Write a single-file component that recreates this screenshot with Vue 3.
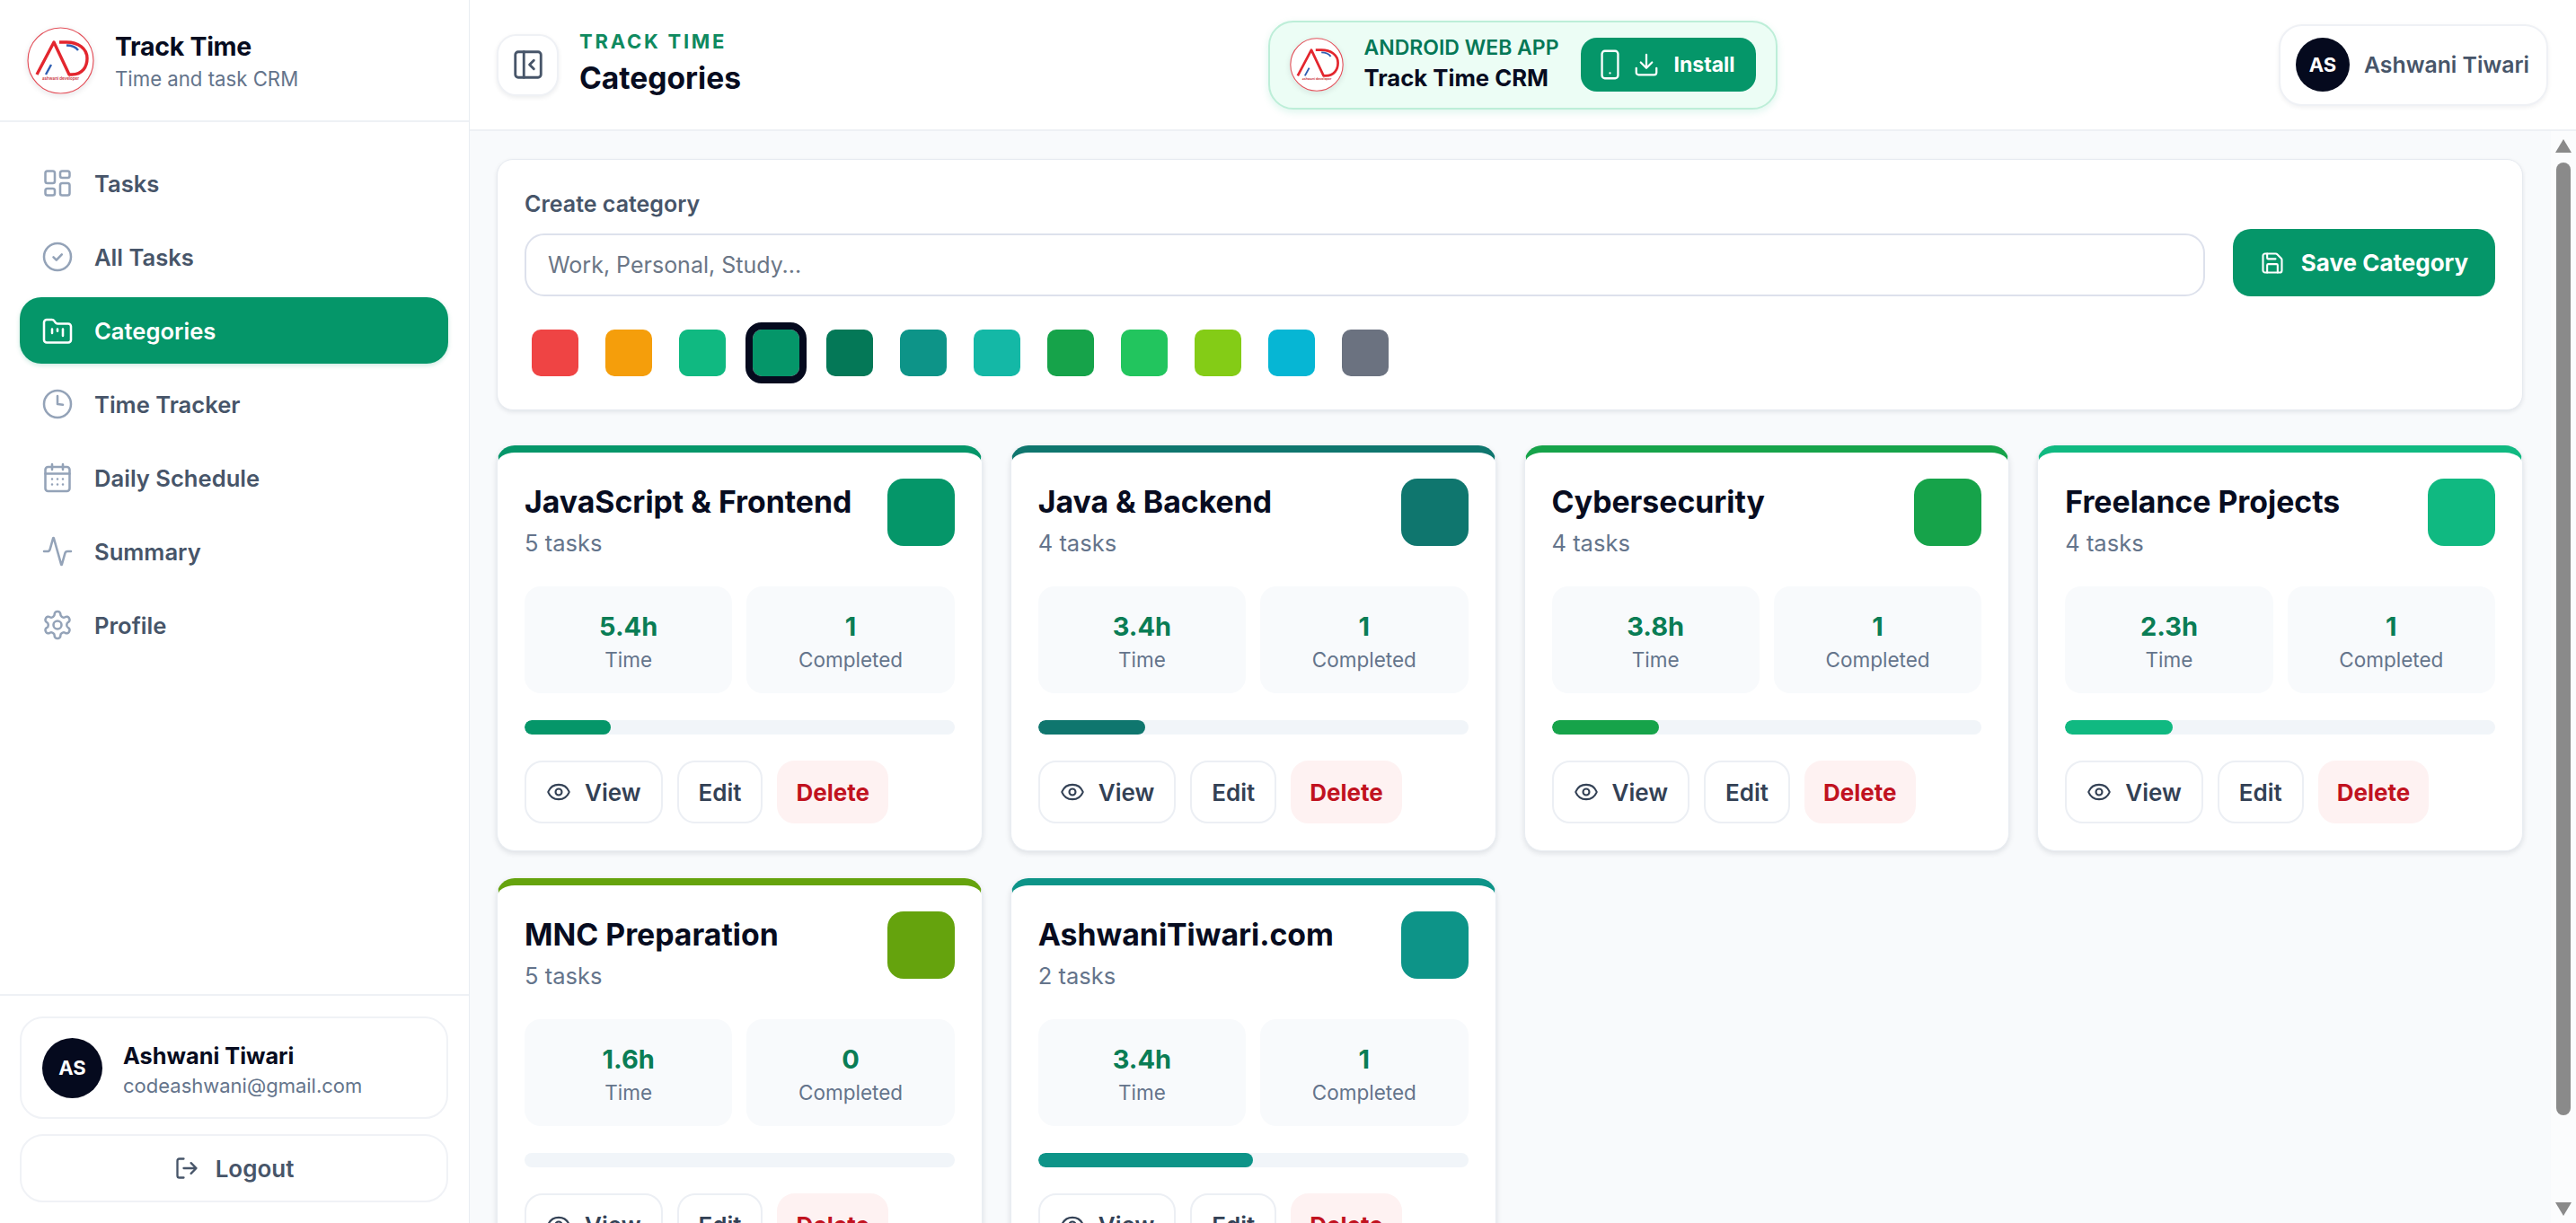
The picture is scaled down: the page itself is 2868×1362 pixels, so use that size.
<script setup>
const nav = [
  { label: 'Tasks', icon: 'tasks' },
  { label: 'All Tasks', icon: 'all' },
  { label: 'Categories', icon: 'cat', active: true },
  { label: 'Time Tracker', icon: 'time' },
  { label: 'Daily Schedule', icon: 'cal' },
  { label: 'Summary', icon: 'sum' },
  { label: 'Profile', icon: 'gear' }
]
const swatches = ['#ef4444', '#f59e0b', '#10b981', '#059669', '#047857', '#0d9488', '#14b8a6', '#16a34a', '#22c55e', '#84cc16', '#06b6d4', '#6b7280']
const cards = [
  { name: 'JavaScript & Frontend', tasks: '5 tasks', time: '5.4h', done: 1, color: '#059669', pct: 20 },
  { name: 'Java & Backend', tasks: '4 tasks', time: '3.4h', done: 1, color: '#0f766e', pct: 25 },
  { name: 'Cybersecurity', tasks: '4 tasks', time: '3.8h', done: 1, color: '#16a34a', pct: 25 },
  { name: 'Freelance Projects', tasks: '4 tasks', time: '2.3h', done: 1, color: '#10b981', pct: 25 },
  { name: 'MNC Preparation', tasks: '5 tasks', time: '1.6h', done: 0, color: '#65a30d', pct: 0 },
  { name: 'AshwaniTiwari.com', tasks: '2 tasks', time: '3.4h', done: 1, color: '#0d9488', pct: 50 }
]
</script>

<template>
  <div class="app">
    <aside class="sidebar">
      <div class="brand">
        <div class="logo">
          <svg viewBox="0 0 75 75" width="75" height="75">
            <circle cx="37.5" cy="37.5" r="36.5" fill="#fff" stroke="#e2505a" stroke-width="1.2" />
            <path d="M11 53 L30 17 L47 53 L50 53 C62 53 67 44 67 35 C67 24 57 17 44 17 L36 17" fill="none" stroke="#e3262e" stroke-width="3.400" stroke-linejoin="round" />
            <path d="M21 53 L27 42 M44 20.500 C50 20.500 54 22 57 26" fill="none" stroke="#2f5fb3" stroke-width="2.400" />
            <text x="37.500" y="58.500" text-anchor="middle" class="logo-text">ashwani developer</text>
          </svg>
        </div>
        <div>
          <div class="brand-title">Track Time</div>
          <div class="brand-sub">Time and task CRM</div>
        </div>
      </div>

      <nav class="nav">
        <a v-for="item in nav" :key="item.label" class="nav-item" :class="{ active: item.active }">
          <svg class="nav-icon" viewBox="0 0 24 24">
            <template v-if="item.icon === 'tasks'">
              <rect x="3" y="3" width="7" height="9" rx="1.500" />
              <rect x="14" y="3" width="7" height="5" rx="1.500" />
              <rect x="14" y="12" width="7" height="9" rx="1.500" />
              <rect x="3" y="16" width="7" height="5" rx="1.500" />
            </template>
            <template v-else-if="item.icon === 'all'">
              <circle cx="12" cy="12" r="10" />
              <path d="m9 12.200 2.200 2.200 4-4.200" />
            </template>
            <template v-else-if="item.icon === 'cat'">
              <path d="M4 21h16a2 2 0 0 0 2-2V9a2 2 0 0 0-2-2h-7.930a2 2 0 0 1-1.660-.9l-.82-1.200A2 2 0 0 0 7.930 4H4a2 2 0 0 0-2 2v13c0 1.100.9 2 2 2Z" />
              <path d="M8 11v3M12 11v1.500M16 11v5" />
            </template>
            <template v-else-if="item.icon === 'time'">
              <circle cx="12" cy="12" r="10" />
              <path d="M12 6v6l4 0.500" />
            </template>
            <template v-else-if="item.icon === 'cal'">
              <rect x="3" y="4" width="18" height="18" rx="2" />
              <path d="M8 2v4M16 2v4M3 9h18M8 13h.01M12 13h.01M16 13h.01M8 17h.01M12 17h.01M16 17h.01" />
            </template>
            <template v-else-if="item.icon === 'sum'">
              <path d="M22 12h-2.480a2 2 0 0 0-1.930 1.460l-2.350 8.360a.25.25 0 0 1-.48 0L9.240 2.180a.25.25 0 0 0-.48 0l-2.350 8.360A2 2 0 0 1 4.490 12H2" />
            </template>
            <template v-else>
              <path d="M12.220 2h-.44a2 2 0 0 0-2 2v.18a2 2 0 0 1-1 1.730l-.43.25a2 2 0 0 1-2 0l-.15-.08a2 2 0 0 0-2.730.73l-.22.38a2 2 0 0 0 .73 2.730l.15.1a2 2 0 0 1 1 1.720v.51a2 2 0 0 1-1 1.740l-.15.09a2 2 0 0 0-.73 2.730l.22.38a2 2 0 0 0 2.730.73l.15-.08a2 2 0 0 1 2 0l.43.25a2 2 0 0 1 1 1.730V20a2 2 0 0 0 2 2h.44a2 2 0 0 0 2-2v-.18a2 2 0 0 1 1-1.730l.43-.25a2 2 0 0 1 2 0l.15.08a2 2 0 0 0 2.730-.73l.22-.39a2 2 0 0 0-.73-2.730l-.15-.08a2 2 0 0 1-1-1.740v-.5a2 2 0 0 1 1-1.740l.15-.09a2 2 0 0 0 .73-2.730l-.22-.38a2 2 0 0 0-2.730-.73l-.15.08a2 2 0 0 1-2 0l-.43-.25a2 2 0 0 1-1-1.730V4a2 2 0 0 0-2-2z" />
              <circle cx="12" cy="12" r="3" />
            </template>
          </svg>
          <span>{{ item.label }}</span>
        </a>
      </nav>

      <div class="side-foot">
        <div class="user-card">
          <div class="avatar big">AS</div>
          <div class="user-text">
            <div class="user-name">Ashwani Tiwari</div>
            <div class="user-mail">codeashwani@gmail.com</div>
          </div>
        </div>
        <button class="logout">
          <svg class="ico logout-ico" viewBox="0 0 24 24">
            <path d="M9 21H5a2 2 0 0 1-2-2V5a2 2 0 0 1 2-2h4M16 17l5-5-5-5M21 12H9" />
          </svg>
          Logout
        </button>
      </div>
    </aside>

    <div class="main">
      <header class="topbar">
        <div class="top-left">
          <button class="toggle">
            <svg class="ico toggle-ico" viewBox="0 0 24 24">
              <rect x="3" y="3" width="18" height="18" rx="2" />
              <path d="M9 3v18M16 15l-3-3 3-3" />
            </svg>
          </button>
          <div class="titles">
            <div class="eyebrow">TRACK TIME</div>
            <h1 class="page-title">Categories</h1>
          </div>
        </div>

        <div class="banner">
          <div class="logo small">
            <svg viewBox="0 0 75 75" width="60" height="60">
              <circle cx="37.500" cy="37.500" r="36.500" fill="#fff" stroke="#e2505a" stroke-width="1.400" />
              <path d="M11 53 L30 17 L47 53 L50 53 C62 53 67 44 67 35 C67 24 57 17 44 17 L36 17" fill="none" stroke="#e3262e" stroke-width="3.400" stroke-linejoin="round" />
              <path d="M21 53 L27 42 M44 20.500 C50 20.500 54 22 57 26" fill="none" stroke="#2f5fb3" stroke-width="2.400" />
              <text x="37.500" y="58.500" text-anchor="middle" class="logo-text">ashwani developer</text>
            </svg>
          </div>
          <div class="banner-text">
            <div class="banner-top">ANDROID WEB APP</div>
            <div class="banner-name">Track Time CRM</div>
          </div>
          <button class="install">
            <svg class="ico phone-ico" viewBox="0 0 20 32">
              <rect x="1.500" y="1.500" width="17" height="29" rx="3" />
              <path d="M10 25h.01" />
            </svg>
            <svg class="ico dl-ico" viewBox="0 0 24 24">
              <path d="M21 15v4a2 2 0 0 1-2 2H5a2 2 0 0 1-2-2v-4M7 10l5 5 5-5M12 15V3" />
            </svg>
            <span>Install</span>
          </button>
        </div>

        <div class="top-right">
          <div class="chip">
            <div class="avatar">AS</div>
            <span class="chip-name">Ashwani Tiwari</span>
          </div>
        </div>
      </header>

      <div class="body">
        <main class="content">
          <section class="panel">
            <label class="panel-label">Create category</label>
            <div class="form-row">
              <input class="field" placeholder="Work, Personal, Study..." />
              <button class="save">
                <svg class="ico save-ico" viewBox="0 0 24 24">
                  <path d="M15.200 3a2 2 0 0 1 1.400.6l3.800 3.800a2 2 0 0 1 .6 1.400V19a2 2 0 0 1-2 2H5a2 2 0 0 1-2-2V5a2 2 0 0 1 2-2z" />
                  <path d="M17 21v-7a1 1 0 0 0-1-1H8a1 1 0 0 0-1 1v7M7 3v4a1 1 0 0 0 1 1h7" />
                </svg>
                Save Category
              </button>
            </div>
            <div class="swatches">
              <span
                v-for="(c, i) in swatches"
                :key="c"
                class="swatch"
                :class="{ picked: i === 3 }"
                :style="{ backgroundColor: c }"
              ></span>
            </div>
          </section>

          <section class="grid">
            <article v-for="card in cards" :key="card.name" class="card" :style="{ borderTopColor: card.color }">
              <div class="card-head">
                <div class="card-titles">
                  <h2 class="card-name">{{ card.name }}</h2>
                  <div class="card-sub">{{ card.tasks }}</div>
                </div>
                <div class="card-color" :style="{ backgroundColor: card.color }"></div>
              </div>
              <div class="stats">
                <div class="stat">
                  <div class="stat-val">{{ card.time }}</div>
                  <div class="stat-lbl">Time</div>
                </div>
                <div class="stat">
                  <div class="stat-val">{{ card.done }}</div>
                  <div class="stat-lbl">Completed</div>
                </div>
              </div>
              <div class="track">
                <div class="fill" :style="{ width: card.pct + '%', backgroundColor: card.color }"></div>
              </div>
              <div class="actions">
                <button class="btn view">
                  <svg class="ico eye-ico" viewBox="0 0 24 24">
                    <path d="M2.060 12.350a1 1 0 0 1 0-.7 10.750 10.750 0 0 1 19.880 0 1 1 0 0 1 0 .7 10.750 10.750 0 0 1-19.880 0" />
                    <circle cx="12" cy="12" r="3" />
                  </svg>
                  View
                </button>
                <button class="btn">Edit</button>
                <button class="btn danger">Delete</button>
              </div>
            </article>
          </section>
        </main>

        <div class="scrollbar">
          <span class="arrow up"></span>
          <span class="thumb"></span>
          <span class="arrow down"></span>
        </div>
      </div>
    </div>
  </div>
</template>

<style scoped>
* { box-sizing: border-box; }
.app {
  display: flex;
  height: 100vh;
  overflow: hidden;
  font-family: Inter, "Liberation Sans", sans-serif;
  background: #f8fafc;
  color: #0b1020;
}
.sidebar {
  width: 523px;
  flex: none;
  display: flex;
  flex-direction: column;
  background: #fff;
  border-right: 1px solid #e9edf2;
}
.brand {
  height: 136px;
  display: flex;
  align-items: center;
  gap: 23px;
  padding: 3px 30px 0;
  border-bottom: 2px solid #eef1f5;
}
.logo { width: 75px; height: 75px; border-radius: 50%; box-shadow: 0 2px 6px rgba(15, 23, 42, .1); flex: none; }
.brand .logo { margin-top: -3px; }
.logo svg { display: block; }
.logo.small { width: 60px; height: 60px; }
.logo-text { font-size: 4.500px; font-weight: 600; fill: #c8323a; font-family: Inter, sans-serif; }
.brand-title { font-size: 28.500px; font-weight: 700; line-height: 38px; color: #070c20; letter-spacing: -0.3px; }
.brand-sub { font-size: 22.200px; font-weight: 400; line-height: 34px; color: #64748b; }
.nav {
  flex: 1;
  display: flex;
  flex-direction: column;
  gap: 8px;
  padding: 31px 23px 0 22px;
}
.nav-item {
  height: 74px;
  display: flex;
  align-items: center;
  gap: 23px;
  padding-left: 24px;
  border-radius: 24px;
  font-size: 25.600px;
  font-weight: 600;
  color: #475569;
}
.nav-icon { width: 36px; height: 36px; flex: none; fill: none; stroke: #94a3b8; stroke-width: 1.700; stroke-linecap: round; stroke-linejoin: round; }
.nav-item.active { background: #059669; color: #fff; box-shadow: 0 2px 5px rgba(5, 150, 105, .2); }
.nav-item.active .nav-icon { stroke: #fff; }
.side-foot {
  border-top: 2px solid #eef1f5;
  padding: 23px 23px 23px 22px;
  display: flex;
  flex-direction: column;
  gap: 17px;
}
.user-card {
  height: 114px;
  display: flex;
  align-items: center;
  gap: 23px;
  padding-left: 23px;
  border: 2px solid #f0f2f6;
  border-radius: 26px;
}
.user-text { padding-top: 5px; }
.user-name { font-size: 25.300px; font-weight: 700; line-height: 34px; color: #070c20; }
.user-mail { font-size: 22px; line-height: 32px; color: #64748b; }
.avatar {
  width: 60px;
  height: 60px;
  flex: none;
  border-radius: 50%;
  background: #050a1e;
  color: #fff;
  display: flex;
  align-items: center;
  justify-content: center;
  font-size: 22px;
  font-weight: 700;
}
.avatar.big { width: 67px; height: 67px; }
.logout {
  height: 76px;
  display: flex;
  align-items: center;
  justify-content: center;
  gap: 18px;
  border: 2px solid #f0f2f6;
  border-radius: 26px;
  background: #fff;
  font: 600 26px Inter, sans-serif;
  color: #475569;
}
.ico { fill: none; stroke: currentColor; stroke-width: 2; stroke-linecap: round; stroke-linejoin: round; flex: none; }
.logout-ico { width: 28px; height: 28px; }
.main { flex: 1; min-width: 0; display: flex; flex-direction: column; }
.topbar {
  height: 146px;
  flex: none;
  display: grid;
  grid-template-columns: 1fr auto 1fr;
  align-items: center;
  padding: 0 31px 0 30px;
  background: #fff;
  border-bottom: 2px solid #eef1f5;
}
.top-left { display: flex; align-items: center; gap: 23px; }
.toggle {
  width: 69px;
  height: 69px;
  display: flex;
  align-items: center;
  justify-content: center;
  background: #fff;
  border: 2px solid #eff1f5;
  border-radius: 22px;
  box-shadow: 0 2px 5px rgba(15, 23, 42, .08);
  color: #475569;
}
.toggle-ico { width: 38px; height: 38px; stroke-width: 1.800; }
.titles { padding-bottom: 2px; }
.eyebrow { font-size: 22px; font-weight: 700; line-height: 24px; letter-spacing: 2.750px; color: #0f8a5f; }
.page-title { margin: 7px 0 0; font-size: 33.600px; font-weight: 700; line-height: 44px; color: #070c20; }
.banner {
  height: 99px;
  width: 567px;
  display: flex;
  align-items: center;
  padding: 0 22px;
  background: #ecfdf5;
  border: 2px solid #bdeed8;
  border-radius: 28px;
  box-shadow: 0 3px 8px rgba(16, 185, 129, .14);
}
.banner-text { margin-left: 23px; flex: 1; }
.banner-top { font-size: 23px; font-weight: 600; line-height: 30px; color: #047857; white-space: nowrap; }
.banner-name { font-size: 25.700px; font-weight: 700; line-height: 38px; color: #070c20; white-space: nowrap; }
.install {
  width: 195px;
  height: 60px;
  display: flex;
  align-items: center;
  justify-content: center;
  gap: 15px;
  border: 0;
  border-radius: 18px;
  background: #059669;
  color: #fff;
  font: 700 23px Inter, sans-serif;
}
.phone-ico { width: 21px; height: 34px; stroke-width: 2.200; }
.dl-ico { width: 30px; height: 30px; stroke-width: 1.800; }
.top-right { display: flex; justify-content: flex-end; }
.chip {
  width: 300px;
  height: 91px;
  display: flex;
  align-items: center;
  gap: 16px;
  padding-left: 17px;
  background: #fff;
  border: 2px solid #eff1f5;
  border-radius: 26px;
  box-shadow: 0 2px 5px rgba(15, 23, 42, .06);
}
.chip-name { font-size: 24.800px; font-weight: 600; color: #475569; white-space: nowrap; }
.body { flex: 1; min-height: 0; display: flex; }
.content {
  flex: 1;
  min-width: 0;
  overflow: hidden;
  padding: 31px 31px 31px 30px;
  display: flex;
  flex-direction: column;
  gap: 39px;
}
.scrollbar {
  width: 28px;
  flex: none;
  display: flex;
  flex-direction: column;
  align-items: center;
  background: #fbfcfd;
}
.arrow { width: 18px; height: 15px; background: #8a8a8a; flex: none; }
.arrow.up { margin-top: 9px; clip-path: polygon(50% 0, 100% 100%, 0 100%); }
.arrow.down { margin-top: auto; margin-bottom: 8px; clip-path: polygon(0 0, 100% 0, 50% 100%); }
.thumb { width: 16px; height: 1061px; margin-top: 11px; border-radius: 8px; background: #8a8a8a; flex: none; }
.panel {
  flex: none;
  height: 280px;
  padding: 33px 30px 0;
  background: #fff;
  border: 1px solid #e6eaf0;
  border-radius: 18px;
  box-shadow: 0 2px 5px rgba(15, 23, 42, .09);
}
.panel-label { display: block; font-size: 25px; font-weight: 600; line-height: 32px; color: #475569; }
.form-row { margin-top: 12px; display: flex; align-items: flex-end; gap: 31px; }
.field {
  flex: 1;
  min-width: 0;
  height: 70px;
  padding: 0 24px;
  border: 2px solid #dde1ec;
  border-radius: 22px;
  outline: none;
  background: #fff;
  font: 400 25px Inter, sans-serif;
  color: #0b1020;
}
.field::placeholder { color: #6b7686; opacity: 1; }
.save {
  width: 292px;
  height: 75px;
  flex: none;
  display: flex;
  align-items: center;
  justify-content: center;
  gap: 18px;
  border: 0;
  border-radius: 20px;
  background: #059669;
  color: #fff;
  font: 700 26px Inter, sans-serif;
}
.save-ico { width: 28px; height: 28px; stroke-width: 1.800; }
.swatches { margin-top: 29px; display: flex; gap: 14px; }
.swatch {
  width: 68px;
  height: 68px;
  border: 8px solid transparent;
  border-radius: 18px;
  background-clip: padding-box;
}
.swatch.picked { border-color: #050a1e; }
.grid {
  flex: none;
  display: grid;
  grid-template-columns: repeat(4, 1fr);
  gap: 30px 31px;
  align-items: start;
}
.card {
  padding: 29px 30px 30px;
  background: #fff;
  border: 1px solid #e9edf2;
  border-top: 8px solid;
  border-radius: 20px;
  box-shadow: 0 2px 6px rgba(15, 23, 42, .12);
}
.card-head { display: flex; justify-content: space-between; align-items: flex-start; }
.card-titles { padding-top: 4px; min-width: 0; }
.card-name { margin: 0; font-size: 33.800px; font-weight: 700; line-height: 44px; color: #070c20; white-space: nowrap; }
.card-sub { margin-top: 7px; font-size: 25.500px; line-height: 34px; color: #64748b; }
.card-color { width: 75px; height: 75px; flex: none; border-radius: 18px; }
.stats { margin-top: 31px; display: grid; grid-template-columns: 1fr 1fr; gap: 16px; }
.stat { height: 119px; padding-top: 25px; background: #f8fafc; border-radius: 18px; text-align: center; }
.stat-val { font-size: 29px; font-weight: 700; line-height: 40px; color: #0a7d55; }
.stat-lbl { font-size: 22.500px; line-height: 34px; color: #64748b; }
.track { margin-top: 30px; height: 16px; border-radius: 8px; background: #f1f5f9; overflow: hidden; }
.fill { height: 100%; border-radius: 8px; }
.actions { margin-top: 29px; display: flex; gap: 16px; }
.btn {
  height: 70px;
  display: flex;
  align-items: center;
  gap: 15px;
  padding: 0 22px;
  background: #fff;
  border: 2px solid #eceff4;
  border-radius: 20px;
  font: 600 26px Inter, sans-serif;
  color: #334155;
}
.btn.view { padding: 0 22px; }
.btn.danger { background: #fef2f2; border-color: #fef2f2; color: #c1121f; padding: 0 19px; font-weight: 700; }
.eye-ico { width: 28px; height: 28px; stroke-width: 1.800; }
</style>
